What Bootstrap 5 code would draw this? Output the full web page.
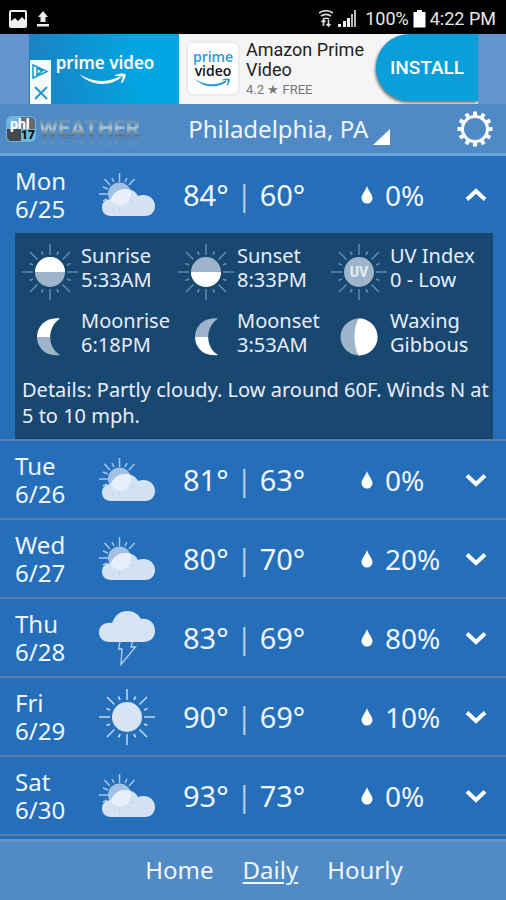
<!DOCTYPE html>
<html lang="en">
<head>
<meta charset="utf-8">
<meta name="viewport" content="width=device-width, initial-scale=1">
<title>PHL17 Weather - Daily</title>
<link href="https://cdn.jsdelivr.net/npm/bootstrap@5.3.0/dist/css/bootstrap.min.css" rel="stylesheet">
<style>
  body { background: #256eb9; color: #f0f5fd; font-family: "Noto Sans", sans-serif; font-size: 24px; line-height: 28px; }
  svg { display: block; flex: none; }
  .app { min-height: 100vh; }
  .status { background: #000; color: #e8e8e8; height: 34px; font: 18px/34px Roboto, sans-serif; padding: 3px 10px 0 9px; }
  .ad-strip { background: #6593cd; height: 70px; padding: 0 28px 0 29px; font-family: Roboto, sans-serif; }
  .ad-brand { width: 150px; background: linear-gradient(80deg, #1d7fc1, #02a5e0 70%); }
  .ad-choices { width: 22px; margin-top: 26px; }
  .ad-name { font: 600 17px/20px "Noto Sans", sans-serif; padding-top: 19px; }
  .ad-body { background: #f5f5f5; color: #222; }
  .ad-tile { width: 50px; height: 51px; background: #fff; border-radius: 5px; box-shadow: 0 0 3px #ccc; font: 600 14px/14px "Open Sans", sans-serif; margin: 9px 8px 0 9px; padding-top: 7px; color: #111; }
  .ad-tile .blue { color: #2a9bd6; }
  .ad-title { font-size: 18px; line-height: 20px; padding-top: 6px; }
  .ad-rate { font-size: 13px; line-height: 20px; color: #777; }
  .install { width: 102px; height: 67px; border: 0; border-radius: 34px 0 0 34px; background: #0a9edb; color: #fff; font-weight: 500; font-size: 19px; box-shadow: -1px 2px 3px #777; }
  .top-bar { background: #4f8ac6; border-bottom: 3px solid #68a7dc; height: 52px; padding: 0 12px 0 6px; }
  .wordmark { font: 900 22px/20px Roboto, sans-serif; margin-left: 3px; background: linear-gradient(#6c93ae 15%, #a9c3d1 45%, #56707f 85%); -webkit-background-clip: text; background-clip: text; color: transparent; -webkit-box-reflect: below -5px linear-gradient(transparent 40%, #000a); }
  .place { appearance: none; background: transparent; border: 0; color: #f0f5fd; padding: 0; font-size: 24px; line-height: 34px; }
  .day-row { display: grid; grid-template-columns: 83px 84px 1fr 104px 22px; align-items: center; min-height: 77px; padding: 0 19px 0 15px; }
  .day { border-bottom: 2px solid #5b7da8; }
  .day.day-row { min-height: 79px; }
  .temps { font-size: 29px; line-height: 36px; padding-left: 1px; }
  .temps span { color: #b4cdea; }
  .rain { font-size: 28px; line-height: 36px; gap: 12px; }
  .toggle { border: 0; background: none; padding: 0; color: #fff; }
  .details { background: #184770; color: #e9eefb; margin: 0 13px 0 15px; padding: 7px 2px 10px 7px; font-size: 20px; line-height: 24px; }
  .facts { display: grid; grid-template-columns: 156fr 153fr 160fr; row-gap: 1px; }
  .fact { gap: 3px; min-height: 64px; }
  .fact-text { padding-top: 4px; }
  .summary { line-height: 26px; padding-top: 8px; }
  .bottom-nav { background: #508bc5; border-top: 3px solid #6495cf; margin-top: 3px; gap: 29px; padding: 14px 0 16px 42px; }
  .bottom-nav a { color: #f0f5fd; text-decoration: none; }
  .bottom-nav a.current { text-decoration: underline; text-decoration-thickness: 2px; text-underline-offset: 3px; }
</style>
<script src="https://cdn.jsdelivr.net/npm/bootstrap@5.3.0/dist/js/bootstrap.bundle.min.js"></script>
</head>
<body>
<svg width="0" height="0" class="position-absolute" aria-hidden="true">
  <defs>
    <g id="rays" fill="none">
      <path stroke-width="1.5" d="M28 0V11M28 45V56M0 28H11M45 28H56M8 8L15.500 15.500M40.500 40.500L48 48M48 8L40.500 15.500M15.500 40.500L8 48"/>
      <path stroke-width="1.800" d="M21 11L19.500 7.500M35 11L36.500 7.500M21 45L19.500 48.500M35 45L36.500 48.500M11 21L7.500 19.500M11 35L7.500 36.500M45 21L48.500 19.500M45 35L48.500 36.500"/>
    </g>
    <symbol id="partly" viewBox="0 0 58 46">
      <g stroke="#a9c6e8" stroke-width="1.500"><path d="M21.500 1V10M1 22H10M6.500 7L12 13M36.500 7L31 13M14 6L16 10M29 6L27 10M5 15L10 17M5 29L9 27"/></g>
      <circle cx="21.500" cy="22" r="11.500" fill="#a2c1e4"/>
      <path d="M13 44C7 44 4 40 4 35.500C4 30.500 8 27 13 27C16 20 21 17 28 17C34 17 38 20 40 24C49 21 57 26 57 34C57 40 53 44 47 44Z" fill="#d5e2f3"/>
      <path d="M15 31C14 29 13 28 12.800 27C16 20 21 17 28 17C30 17 31.500 17.500 32.500 18C35 27 29 35 20 33.500Z" fill="#e8effb"/>
      <path d="M21.500 35V41M29 32L32 35M31 28L36 30M17 36L14 39" stroke="#c1d4eb" fill="none"/>
    </symbol>
    <symbol id="storm" viewBox="0 0 58 56">
      <path d="M12 32C5 32 1 28 1 22.500C1 16 6 12 14 13C17 5 22 1 29 1C36 1 40 4 43 9C51 8 57 13 57 21C57 28 52 32 45 32Z" fill="#d6e4f3"/>
      <path d="M22 32L20.500 39H24L23 54.500L37.500 37H33L34.500 32" fill="none" stroke="#b9cfea" stroke-width="1.300"/>
    </symbol>
    <symbol id="sunny" viewBox="0 0 56 56"><use href="#rays" stroke="#c4d8ed"/><circle cx="28" cy="28" r="15" fill="#d6e4f3"/></symbol>
    <symbol id="sunrise" viewBox="0 0 56 56"><use href="#rays" stroke="#5f8ab1"/><circle cx="28" cy="28" r="15" fill="#9db4cb"/><path d="M13 28A15 15 0 0 1 43 28Z" fill="#fff"/></symbol>
    <symbol id="sunset" viewBox="0 0 56 56"><use href="#rays" stroke="#5f8ab1"/><circle cx="28" cy="28" r="15" fill="#9db4cb"/><path d="M13 28A15 15 0 0 0 43 28Z" fill="#fff"/></symbol>
    <symbol id="drop" viewBox="0 0 12 18"><path d="M6 0C7 4 11.500 8.500 11.500 12A5.500 5.500 0 0 1 .5 12C.5 8.500 5 4 6 0Z" fill="#fff"/></symbol>
    <symbol id="chevron" viewBox="0 0 22 14"><path d="M2 2.500L11 11L20 2.500" fill="none" stroke="currentColor" stroke-width="4"/></symbol>
    <symbol id="smile" viewBox="0 0 48 13"><path d="M0 1C14 10 29 10 41 3L42 5C29 14 12 13 0 1Z"/><path d="M36 2C40 .5 44 0 46.500 1C47 4 45 8 43 10L42 9.500C43 7 44 5 43.500 3.500C42 2.500 39 3 36 3Z"/></symbol>
  </defs>
</svg>

<div class="app d-flex flex-column">
  <div class="status d-flex align-items-center">
    <svg width="18" height="18" viewBox="0 0 18 18"><rect x="1" y="1" width="16" height="16" rx="1" fill="none" stroke="#eee" stroke-width="2"/><path d="M2 16V11L6 8L9 11L13 7L16 10V16Z" fill="#eee"/></svg>
    <svg class="ms-2" width="16" height="16" viewBox="0 0 14 16"><path d="M7 0L12 6H9.500V11H4.500V6H2ZM1 13H13V15.500H1Z" fill="#eee"/></svg>
    <svg class="ms-auto" width="14" height="17" viewBox="0 0 14 17"><path d="M0 3C4 0 10 0 14 3M2 6C5 4 9 4 12 6M4 9C6 8 8 8 10 9M4.500 16V10M2.500 12L4.500 10L6.500 12M9.500 10V16M7.500 14L9.500 16L11.500 14" fill="none" stroke="#ddd" stroke-width="1.600"/></svg>
    <svg class="ms-1" width="20" height="17" viewBox="0 0 20 17"><path d="M1 17V14H4V17ZM6 17V11H9V17ZM10 17V8H13V17Z" fill="#eee"/><path d="M14 17V4H16V17ZM17 17V0H19V17Z" fill="#bbb"/></svg>
    <span class="ms-1 ps-1">100%</span>
    <svg class="ms-1" width="13" height="18" viewBox="0 0 13 18"><path d="M4 0H9V2H12.500V17.500H.5V2H4Z" fill="#fff"/></svg>
    <span class="ms-1">4:22 PM</span>
  </div>

  <aside class="ad-strip d-flex" aria-label="Advertisement">
    <div class="ad-brand d-flex">
      <svg class="ad-choices" height="44" viewBox="0 0 22 44"><rect width="22" height="44" x="1" fill="#f7fbfd"/><path d="M4 5V18L18 11.500ZM8 8V16M8 8L13 11L8 15" fill="none" stroke="#1798c4" stroke-width="1.500"/><path d="M6 27L18 39M18 27L6 39" stroke="#1798c4" stroke-width="1.800"/></svg>
      <div class="text-white text-center flex-fill pe-4"><div class="ad-name ps-1">prime video</div><svg class="mx-auto" width="48" height="13" fill="#fff"><use href="#smile"/></svg></div>
    </div>
    <div class="ad-body flex-fill d-flex">
      <div class="ad-tile text-center"><div class="blue">prime</div><div>video</div><svg class="mx-auto" width="36" height="10" viewBox="0 0 48 13" fill="#2a9bd6"><use href="#smile"/></svg></div>
      <div class="flex-fill"><div class="ad-title">Amazon Prime<br>Video</div><div class="ad-rate">4.2 ★ FREE</div></div>
      <button type="button" class="install">INSTALL</button>
    </div>
  </aside>

  <header class="top-bar d-flex align-items-center">
    <svg width="30" height="26" viewBox="0 0 30 26" role="img" aria-label="phl 17">
      <rect width="30" height="26" rx="6" fill="#6fb6dc"/><path d="M15 1H24C27 1 29 3 29 6V13H15Z" fill="#646b72"/><path d="M1 13H15V25H6C3 25 1 23 1 20Z" fill="#43494f"/>
      <text x="4" y="13" font-family="Roboto, sans-serif" font-weight="900" font-size="14" fill="#fff">phl</text><text x="15" y="23" font-family="Roboto, sans-serif" font-weight="900" font-size="12" fill="#111">17</text>
    </svg>
    <div class="wordmark">WEATHER</div>
    <div class="d-flex align-items-center ms-5">
      <select class="place" aria-label="Location"><option>Philadelphia, PA</option></select>
      <svg class="ms-1 mt-3" width="17" height="16" viewBox="0 0 17 16"><path d="M0 16L17 0V16Z" fill="#fff"/></svg>
    </div>
    <button type="button" class="toggle ms-auto" aria-label="Settings">
      <svg width="38" height="38" viewBox="0 0 38 38" fill="none" stroke="#fff"><circle cx="19" cy="19" r="12.500" stroke-width="3"/><path stroke-width="4" d="M19 6V1.500M19 32V36.500M6 19H1.500M32 19H36.500M12.500 7.700L10.200 3.800M25.500 7.700L27.800 3.800M12.500 30.300L10.200 34.200M25.500 30.300L27.800 34.200M7.700 12.500L3.800 10.200M30.300 12.500L34.200 10.200M7.700 25.500L3.800 27.800M30.300 25.500L34.200 27.800"/></svg>
    </button>
  </header>

  <main class="flex-grow-1">
    <section class="day">
      <div class="day-row">
        <div>Mon<br>6/25</div><svg width="58" height="46"><use href="#partly"/></svg>
        <div class="temps">84° <span>|</span> 60°</div>
        <div class="rain d-flex align-items-center"><svg width="12" height="18"><use href="#drop"/></svg>0%</div>
        <button type="button" class="toggle" aria-label="Hide Monday details" aria-expanded="true"><svg width="22" height="14" viewBox="0 0 22 14"><path d="M2 11.500L11 3L20 11.500" fill="none" stroke="#fff" stroke-width="4"/></svg></button>
      </div>
      <div class="details">
        <div class="facts">
          <div class="fact d-flex"><svg class="mt-1" width="56" height="56"><use href="#sunrise"/></svg><div class="fact-text">Sunrise<br>5:33AM</div></div>
          <div class="fact d-flex"><svg class="mt-1" width="56" height="56"><use href="#sunset"/></svg><div class="fact-text">Sunset<br>8:33PM</div></div>
          <div class="fact d-flex"><svg class="mt-1" width="56" height="56" viewBox="0 0 56 56"><use href="#rays" stroke="#5f8ab1"/><circle cx="28" cy="28" r="15" fill="#9db4cb"/><text x="28" y="33" text-anchor="middle" font-family="Roboto, sans-serif" font-weight="900" font-size="14" fill="#dfe8f2">UV</text></svg><div class="fact-text">UV Index<br>0 - Low</div></div>
          <div class="fact d-flex"><svg class="mt-1" width="56" height="56" viewBox="0 0 56 56"><defs><linearGradient id="riseFill" x2="0" y2="1"><stop offset=".5" stop-color="#fff"/><stop offset=".5" stop-color="#9db4cb"/></linearGradient></defs><path transform="translate(15 9)" d="M23 .5C8 -1 0 9 0 19C0 29 8 39 23 37C10 29 10 9 23 .5Z" fill="url(#riseFill)"/></svg><div class="fact-text">Moonrise<br>6:18PM</div></div>
          <div class="fact d-flex"><svg class="mt-1" width="56" height="56" viewBox="0 0 56 56"><defs><linearGradient id="setFill" x2="0" y2="1"><stop offset=".5" stop-color="#9db4cb"/><stop offset=".5" stop-color="#fff"/></linearGradient></defs><path transform="translate(17 9)" d="M23 .5C8 -1 0 9 0 19C0 29 8 39 23 37C10 29 10 9 23 .5Z" fill="url(#setFill)"/></svg><div class="fact-text">Moonset<br>3:53AM</div></div>
          <div class="fact d-flex"><svg class="mt-1" width="56" height="56" viewBox="0 0 56 56"><circle cx="28" cy="28" r="18.500" fill="#9db4cb"/><path d="M28 9.500A18.500 18.500 0 0 1 28 46.500C22 39 22 17 28 9.500Z" fill="#fff"/></svg><div class="fact-text">Waxing<br>Gibbous</div></div>
        </div>
        <div class="summary">Details: Partly cloudy. Low around 60F. Winds N at 5 to 10 mph.</div>
      </div>
    </section>
    <section class="day day-row">
      <div>Tue<br>6/26</div><svg width="58" height="46"><use href="#partly"/></svg>
      <div class="temps">81° <span>|</span> 63°</div>
      <div class="rain d-flex align-items-center"><svg width="12" height="18"><use href="#drop"/></svg>0%</div>
      <button type="button" class="toggle" aria-label="Show Tuesday details"><svg width="22" height="14"><use href="#chevron"/></svg></button>
    </section>
    <section class="day day-row">
      <div>Wed<br>6/27</div><svg width="58" height="46"><use href="#partly"/></svg>
      <div class="temps">80° <span>|</span> 70°</div>
      <div class="rain d-flex align-items-center"><svg width="12" height="18"><use href="#drop"/></svg>20%</div>
      <button type="button" class="toggle" aria-label="Show Wednesday details"><svg width="22" height="14"><use href="#chevron"/></svg></button>
    </section>
    <section class="day day-row">
      <div>Thu<br>6/28</div><svg width="58" height="56"><use href="#storm"/></svg>
      <div class="temps">83° <span>|</span> 69°</div>
      <div class="rain d-flex align-items-center"><svg width="12" height="18"><use href="#drop"/></svg>80%</div>
      <button type="button" class="toggle" aria-label="Show Thursday details"><svg width="22" height="14"><use href="#chevron"/></svg></button>
    </section>
    <section class="day day-row">
      <div>Fri<br>6/29</div><svg width="58" height="56"><use href="#sunny"/></svg>
      <div class="temps">90° <span>|</span> 69°</div>
      <div class="rain d-flex align-items-center"><svg width="12" height="18"><use href="#drop"/></svg>10%</div>
      <button type="button" class="toggle" aria-label="Show Friday details"><svg width="22" height="14"><use href="#chevron"/></svg></button>
    </section>
    <section class="day day-row">
      <div>Sat<br>6/30</div><svg width="58" height="46"><use href="#partly"/></svg>
      <div class="temps">93° <span>|</span> 73°</div>
      <div class="rain d-flex align-items-center"><svg width="12" height="18"><use href="#drop"/></svg>0%</div>
      <button type="button" class="toggle" aria-label="Show Saturday details"><svg width="22" height="14"><use href="#chevron"/></svg></button>
    </section>
  </main>

  <nav class="bottom-nav d-flex justify-content-center">
    <a href="#home">Home</a><a href="#daily" class="current" aria-current="page">Daily</a><a href="#hourly">Hourly</a>
  </nav>
</div>
</body>
</html>
